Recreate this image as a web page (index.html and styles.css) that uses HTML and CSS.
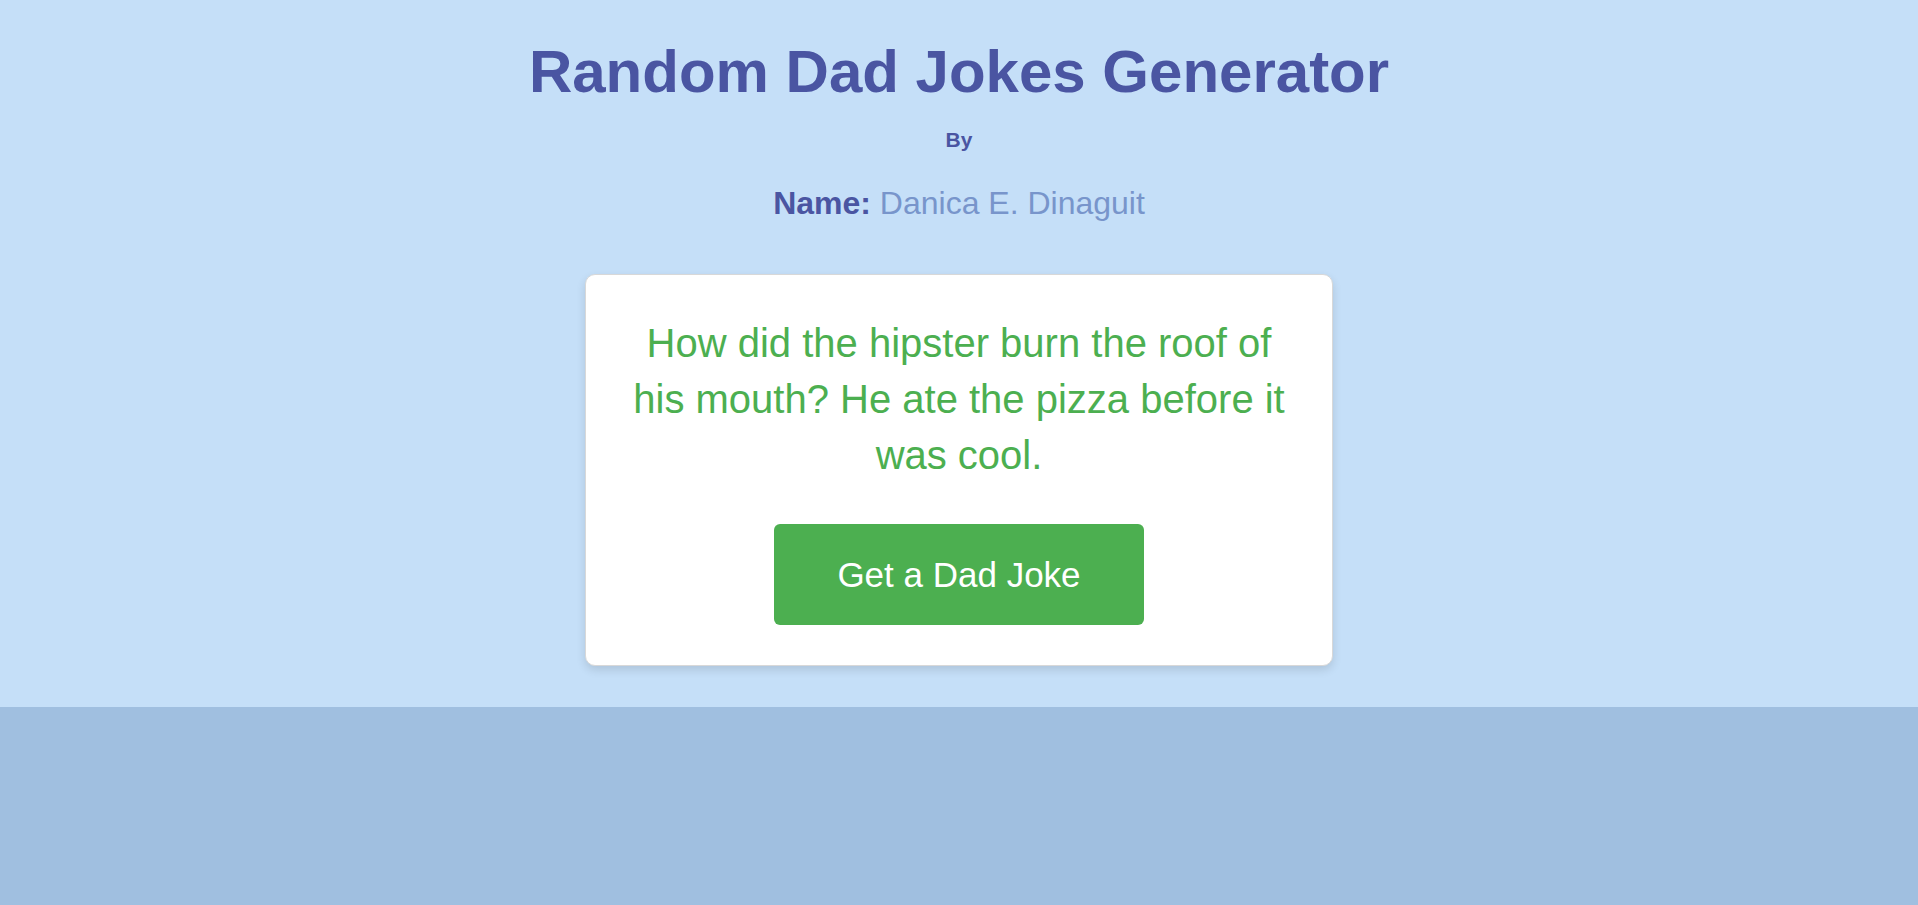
FILE: index.html
```html
<!DOCTYPE html>
<html lang="en">
<head>
<meta charset="UTF-8">
<title>Random Dad Jokes Generator</title>
<link rel="stylesheet" href="styles.css">
</head>
<body>
  <main class="hero">
    <h1 class="title">Random Dad Jokes Generator</h1>
    <p class="by">By</p>
    <p class="name"><strong class="name-label">Name:</strong> <span class="name-value">Danica E. Dinaguit</span></p>
    <section class="card">
      <p class="joke">How did the hipster burn the roof of his mouth? He ate the pizza before it was cool.</p>
      <button class="btn" type="button">Get a Dad Joke</button>
    </section>
  </main>
</body>
</html>
```

FILE: styles.css
```css
* { box-sizing: border-box; }

html, body {
  margin: 0;
  padding: 0;
}

body {
  background: #a0bfe0;
  font-family: "Liberation Sans", Arial, sans-serif;
  min-height: 905px;
}

.hero {
  background: #c5dff8;
  height: 707px;
  display: flex;
  flex-direction: column;
  align-items: center;
  padding-top: 37px;
}

.title {
  margin: 0;
  font-size: 60px;
  font-weight: 700;
  color: #4a55a2;
  line-height: 69px;
}

.by {
  margin: 22px 0 0;
  font-size: 21px;
  font-weight: 700;
  color: #4a55a2;
  line-height: 24px;
}

.name {
  margin: 33px 0 0;
  font-size: 32px;
  line-height: 37px;
  color: #4a55a2;
}

.name-label { font-weight: 700; }
.name-value { color: #7895cb; font-weight: 400; }

.card {
  margin-top: 52px;
  width: 748px;
  background: #ffffff;
  border: 1px solid #d8d8d8;
  border-radius: 10px;
  box-shadow: 0 4px 10px rgba(0, 0, 0, 0.12);
  padding: 40px;
  display: flex;
  flex-direction: column;
  align-items: center;
}

.joke {
  margin: 0 0 41px;
  font-size: 40px;
  line-height: 56px;
  color: #4caf50;
  text-align: center;
}

.btn {
  font-family: "Liberation Sans", Arial, sans-serif;
  font-size: 35px;
  line-height: 41px;
  color: #ffffff;
  background: #4caf50;
  border: none;
  border-radius: 6px;
  padding: 30px 61px;
  width: 370px;
  cursor: pointer;
}
```
